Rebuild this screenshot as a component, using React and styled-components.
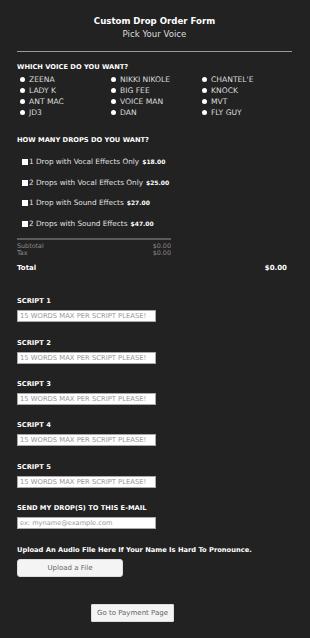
import styled, { createGlobalStyle } from 'styled-components';

const GlobalStyle = createGlobalStyle`
  html, body {
    margin: 0;
    padding: 0;
    background: #222222;
  }
  body {
    font-family: "DejaVu Sans", Verdana, sans-serif;
    color: #e6e6e6;
  }
  * {
    box-sizing: border-box;
  }
`;

const Page = styled.main`
  width: 310px;
  min-height: 638px;
  padding: 16px 18px 0 17px;
  background: #222222;
`;

const Header = styled.header`
  text-align: center;
`;

const Title = styled.h1`
  margin: 0;
  font-size: 8.6px;
  line-height: 11px;
  font-weight: bold;
  color: #ffffff;
`;

const Subtitle = styled.p`
  margin: 3px 0 0;
  font-size: 8.6px;
  line-height: 9px;
  color: #dddddd;
`;

const Divider = styled.hr`
  margin: 12px 0 0;
  border: 0;
  height: 1px;
  background: #9a9a9a;
`;

const SectionLabel = styled.div`
  margin-top: ${(p) => p.$top || 0}px;
  font-size: 6.7px;
  line-height: 9px;
  font-weight: bold;
  color: #ffffff;
  text-transform: uppercase;
`;

const VoiceGrid = styled.div`
  margin-top: 2px;
  display: grid;
  grid-template-columns: 91px 91px 91px;
  grid-auto-rows: 11px;
  padding-left: 3px;
`;

const RadioLabel = styled.label`
  display: flex;
  align-items: center;
  gap: 4px;
  font-size: 7.6px;
  color: #dddddd;
`;

const Radio = styled.input.attrs({ type: 'radio' })`
  appearance: none;
  margin: 0;
  width: 5px;
  height: 5px;
  border-radius: 50%;
  background: #ffffff;
`;

const DropList = styled.div`
  margin-top: 12.5px;
  display: flex;
  flex-direction: column;
  gap: 10.7px;
  padding-left: 5px;
`;

const DropLabel = styled.label`
  display: flex;
  align-items: center;
  font-size: 7.3px;
  line-height: 10px;
  color: #e0e0e0;
`;

const Check = styled.input.attrs({ type: 'checkbox' })`
  appearance: none;
  margin: 0 1px 0 0;
  width: 6px;
  height: 6px;
  background: #ffffff;
`;

const Price = styled.b`
  margin-left: 3px;
  font-size: 6px;
  color: #ffffff;
`;

const Totals = styled.div`
  width: 154px;
  margin-top: 8.5px;
  border-top: 2px solid #5c5c5c;
  padding-top: 3px;
`;

const SumRow = styled.div`
  display: flex;
  justify-content: space-between;
  font-size: 6.4px;
  line-height: 7.7px;
  color: #8a8a8a;
`;

const TotalRow = styled.div`
  width: 270px;
  margin-top: 6.5px;
  display: flex;
  justify-content: space-between;
  font-size: 7px;
  line-height: 9px;
  font-weight: bold;
  color: #ffffff;
`;

const Field = styled.div`
  margin-top: ${(p) => p.$top}px;
  display: flex;
  flex-direction: column;
  gap: 4px;
`;

const TextInput = styled.input`
  width: 139px;
  height: 12px;
  margin: 0;
  padding: 0 2px;
  border: 1px solid #aaaaaa;
  background: #ffffff;
  font-family: "DejaVu Sans", Verdana, sans-serif;
  font-size: ${(p) => p.$size}px;
  color: #333;
  &::placeholder {
    color: #999999;
    text-transform: ${(p) => (p.$upper ? 'uppercase' : 'none')};
  }
`;

const UploadText = styled.div`
  margin-top: 17px;
  font-size: 6.7px;
  line-height: 9px;
  font-weight: bold;
  color: #ffffff;
`;

const Button = styled.button`
  display: block;
  width: ${(p) => p.$width}px;
  height: 18px;
  margin: ${(p) => p.$margin};
  padding: 0;
  border: 1px solid #dddddd;
  border-radius: ${(p) => p.$radius}px;
  background: #f4f4f4;
  font-family: "DejaVu Sans", Verdana, sans-serif;
  font-size: 7px;
  color: #666666;
`;

const voices = [
  'ZEENA', 'NIKKI NIKOLE', "CHANTEL'E",
  'LADY K', 'BIG FEE', 'KNOCK',
  'ANT MAC', 'VOICE MAN', 'MVT',
  'JD3', 'DAN', 'FLY GUY',
];

const drops = [
  ['1 Drop with Vocal Effects Only', '$18.00'],
  ['2 Drops with Vocal Effects Only', '$25.00'],
  ['1 Drop with Sound Effects', '$27.00'],
  ['2 Drops with Sound Effects', '$47.00'],
];

function App() {
  return (
    <Page>
      <GlobalStyle />
      <Header>
        <Title>Custom Drop Order Form</Title>
        <Subtitle>Pick Your Voice</Subtitle>
      </Header>
      <Divider />

      <SectionLabel $top={10.5}>Which voice do you want?</SectionLabel>
      <VoiceGrid>
        {voices.map((v) => (
          <RadioLabel key={v}>
            <Radio name="voice" />
            {v}
          </RadioLabel>
        ))}
      </VoiceGrid>

      <SectionLabel $top={18}>How many drops do you want?</SectionLabel>
      <DropList>
        {drops.map(([text, price]) => (
          <DropLabel key={text}>
            <Check />
            {text}
            <Price>{price}</Price>
          </DropLabel>
        ))}
      </DropList>

      <Totals>
        <SumRow>
          <span>Subtotal</span>
          <span>$0.00</span>
        </SumRow>
        <SumRow>
          <span>Tax</span>
          <span>$0.00</span>
        </SumRow>
      </Totals>
      <TotalRow>
        <span>Total</span>
        <span>$0.00</span>
      </TotalRow>

      {[1, 2, 3, 4, 5].map((n) => (
        <Field key={n} $top={n === 1 ? 24 : 16.3}>
          <SectionLabel>Script {n}</SectionLabel>
          <TextInput $upper $size={6.8} placeholder="15 words max per script please!" />
        </Field>
      ))}

      <Field $top={16.8}>
        <SectionLabel>Send my drop(s) to this e-mail</SectionLabel>
        <TextInput $size={6.6} placeholder="ex: myname@example.com" />
      </Field>

      <UploadText>Upload An Audio File Here If Your Name Is Hard To Pronounce.</UploadText>
      <Button $width={106} $radius={3} $margin="4px 0 0">
        Upload a File
      </Button>
      <Button $width={83} $radius={1} $margin="27px 0 0 74px">
        Go to Payment Page
      </Button>
    </Page>
  );
}

export default App;
